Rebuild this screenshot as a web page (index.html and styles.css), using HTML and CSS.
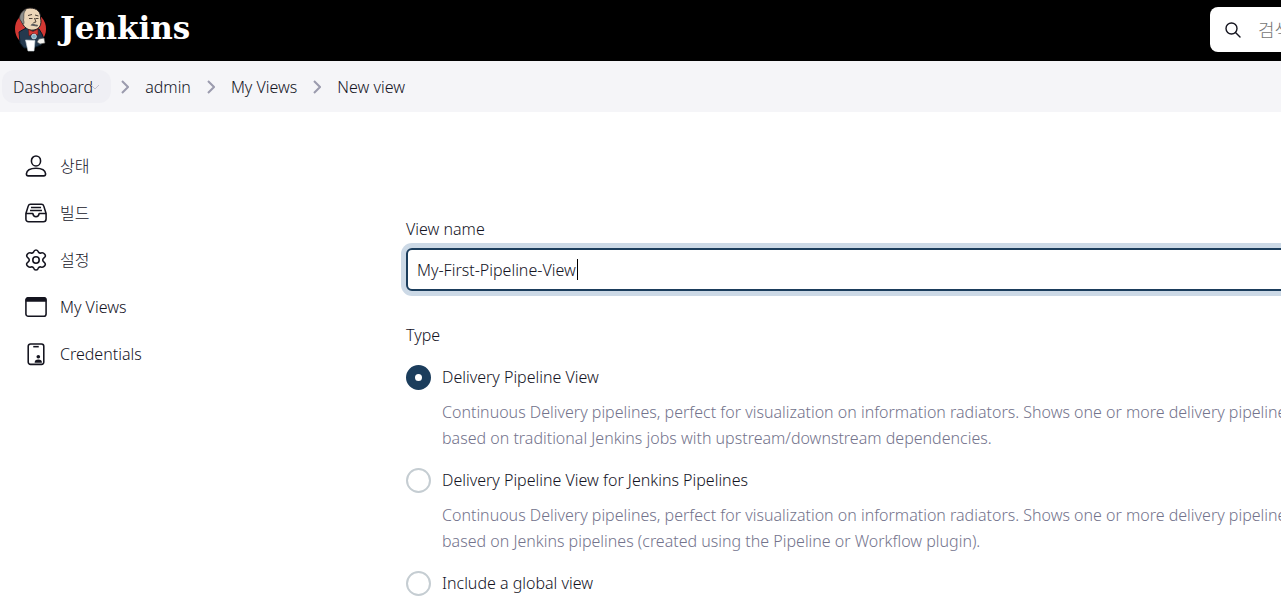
FILE: index.html
```html
<!DOCTYPE html>
<html lang="ko">
<head>
  <meta charset="UTF-8" />
  <title>New view [Jenkins]</title>
  <meta name="viewport" content="width=device-width, initial-scale=1.0" />
  <link rel="stylesheet" href="styles.css">
</head>
<body>
  <div class="page">
    <header class="page-header">
      <a href="#" class="brand">
        <svg class="brand-logo" viewBox="0 0 34 46" aria-hidden="true">
          <ellipse cx="16.5" cy="22" rx="15.5" ry="16.5" fill="#d33833" />
          <path d="M5 25 L12 21 L25 22 L28 27 L30 32 L27 38 L19 41 L10 41 L6 36 Z" fill="#24394e" stroke="#081a26" />
          <path d="M7 13 C5 6 10 1 16 1 C23 1 27 5 26.500 11 C28 17 26 22 20 23 C14 24 9 20 7 13Z" fill="#ecd5b8" stroke="#231f20" />
          <path d="M7 14 C4 11 6 5 12 2.500 C8.500 7 10.500 9 9.500 13 C11 17 9 19 7 14Z" fill="#8f8f8c" stroke="#303030" stroke-width=".6" />
          <path d="M14 8.500 L18 7.500 M21 8 L24.500 9 M15 11.500 L18.500 11.500 M21.500 11.500 L24.500 11.500 M20.500 11 L22 15 L19.500 15.500" fill="none" stroke="#4c4036" />
          <path d="M16.500 18.500 C18.500 15.500 20 16.500 21 17.500 C24 17.500 25 18.500 23 19.500 Z" fill="#5b5a5c" />
          <path d="M12 21 L17 25 L21 24 L19 33 L13 29Z" fill="#24394e" />
          <path d="M14.500 22.500 L19 24.500 L24 22 L24 28 L19 26.500 L15 29 Z" fill="#d33833" stroke="#5d1613" stroke-width=".6" />
          <circle cx="20" cy="29.500" r="2.400" fill="#81b0c4" stroke="#e8eef2" stroke-width=".7" />
          <path d="M11.500 33 L21 33.500 L20 44 L14 44Z" fill="#fff" stroke="#c9d3d8" stroke-width=".6" />
          <path d="M25 32 L30 31 L31 36 L26 37 L23 35Z" fill="#f1f1ee" stroke="#555" stroke-width=".6" />
        </svg>
        <span class="brand-name">Jenkins</span>
      </a>
      <form class="search-box" role="search">
        <svg class="search-icon" viewBox="0 0 16 16" aria-hidden="true">
          <circle cx="6.5" cy="6.5" r="5.5" />
          <path d="M10.5 10.5 L15 15" />
        </svg>
        <input type="search" placeholder="검색 (CTRL+K)" aria-label="검색" />
      </form>
    </header>

    <nav class="breadcrumbs" aria-label="Breadcrumb">
      <a href="#" class="crumb current">Dashboard<svg class="crumb-menu" viewBox="0 0 10 6" aria-hidden="true"><path d="M1 1 L5 5 L9 1" /></svg></a>
      <svg class="separator" viewBox="0 0 8 14" aria-hidden="true"><path d="M1 1 L7 7 L1 13" /></svg>
      <a href="#" class="crumb">admin</a>
      <svg class="separator" viewBox="0 0 8 14" aria-hidden="true"><path d="M1 1 L7 7 L1 13" /></svg>
      <a href="#" class="crumb">My Views</a>
      <svg class="separator" viewBox="0 0 8 14" aria-hidden="true"><path d="M1 1 L7 7 L1 13" /></svg>
      <a href="#" class="crumb">New view</a>
    </nav>

    <div class="page-body">
      <nav class="side-panel" aria-label="Tasks">
        <a href="#" class="task">
          <svg viewBox="0 0 24 24" aria-hidden="true">
            <ellipse cx="12" cy="6.5" rx="5" ry="5.5" />
            <path d="M1.500 20.5 C2 16.500 6.5 14.500 12 14.500 S22 16.500 22.500 20.5 C22.500 22 21.5 22.800 20.5 22.800 H3.5 C2.5 22.800 1.500 22 1.500 20.500Z" />
          </svg>
          <span>상태</span>
        </a>
        <a href="#" class="task">
          <svg viewBox="0 0 24 24" aria-hidden="true">
            <path d="M1 12.500 L3.500 4.500 Q4.100 2.500 6 2.500 H18 Q19.900 2.500 20.500 4.500 L23 12.500 V18.500 Q23 21.500 20 21.500 H4 Q1 21.500 1 18.500Z" />
            <path d="M1 12.500 H8.500 Q9 16 12 16 T15.500 12.500 H23 M6.500 6 H17.500 M5.500 9.300 H18.500" />
          </svg>
          <span>빌드</span>
        </a>
        <a href="#" class="task">
          <svg viewBox="0 0 24 24" aria-hidden="true">
            <circle cx="12" cy="12" r="3.5" />
            <path d="M9.5 3.2 Q10 1 12 1 T14.500 3.200 Q15.500 5 17.500 4.300 Q19.800 3.500 21.500 5.700 T21 9.400 Q19.300 10.700 19.300 12 T21 14.600 Q23 16.200 21.500 18.300 T17.500 19.700 Q15.500 19 14.500 20.800 Q14 23 12 23 T9.500 20.800 Q8.500 19 6.500 19.700 Q4.200 20.500 2.500 18.300 T3 14.600 Q4.700 13.300 4.700 12 T3 9.400 Q1 7.800 2.500 5.700 T6.500 4.300 Q8.500 5 9.500 3.200Z" />
          </svg>
          <span>설정</span>
        </a>
        <a href="#" class="task">
          <svg viewBox="0 0 24 24" aria-hidden="true">
            <rect x="1" y="2" width="22" height="20" rx="2.500" />
            <path class="solid" d="M1.500 5.500 V4 Q1.500 2 4 2 H20 Q22.500 2 22.500 4 V5.500Z" />
          </svg>
          <span>My Views</span>
        </a>
        <a href="#" class="task">
          <svg viewBox="0 0 24 24" aria-hidden="true">
            <rect x="3.500" y="1" width="17" height="22.300" rx="2.500" />
            <path d="M9 4 H15" />
            <circle class="fill" cx="14.500" cy="15" r="2" />
            <path class="fill" d="M10.500 21.500 Q10.500 18 14.500 18 T18.500 21.500Z" />
          </svg>
          <span>Credentials</span>
        </a>
      </nav>

      <main class="main-panel">
        <form class="view-form">
          <label class="form-label" for="name">View name</label>
          <div class="name-field">
            <input type="text" id="name" value="My-First-Pipeline-View" />
            <span class="caret"></span>
          </div>

          <fieldset class="types">
            <legend class="form-label">Type</legend>
            <div class="type">
              <input type="radio" name="mode" id="type-delivery" aria-describedby="help-delivery" checked />
              <label for="type-delivery">Delivery Pipeline View</label>
              <p id="help-delivery">Continuous Delivery pipelines, perfect for visualization on information radiators. Shows one or more delivery pipelines based on traditional Jenkins jobs with upstream/downstream dependencies.</p>
            </div>
            <div class="type">
              <input type="radio" name="mode" id="type-workflow" aria-describedby="help-workflow" />
              <label for="type-workflow">Delivery Pipeline View for Jenkins Pipelines</label>
              <p id="help-workflow">Continuous Delivery pipelines, perfect for visualization on information radiators. Shows one or more delivery pipelines based on Jenkins pipelines (created using the Pipeline or Workflow plugin).</p>
            </div>
            <div class="type">
              <input type="radio" name="mode" id="type-global" />
              <label for="type-global">Include a global view</label>
            </div>
          </fieldset>
        </form>
      </main>
    </div>
  </div>
</body>
</html>
```
FILE: styles.css
```css
* {
  box-sizing: border-box;
}

html {
  overflow: hidden;
}

body {
  margin: 0;
  background: #fff;
  color: #14141f;
  font-family: "Noto Sans", "Noto Sans CJK KR", sans-serif;
  font-size: 16px;
  font-weight: 300;
  line-height: 26px;
}

a {
  color: inherit;
  text-decoration: none;
}

input {
  font: inherit;
  color: inherit;
  margin: 0;
}

.page {
  min-width: 1520px;
}

.page-header {
  display: flex;
  align-items: center;
  justify-content: space-between;
  height: 61px;
  padding: 0 10px 2px 14px;
  background: #000;
}

.brand {
  display: flex;
  align-items: center;
  gap: 12px;
  color: #fff;
}

.brand-logo {
  width: 34px;
  height: 46px;
}

.brand-name {
  padding-bottom: 4px;
  font-family: "DejaVu Serif", serif;
  font-size: 31px;
  font-weight: bold;
  line-height: 40px;
}

.search-box {
  display: flex;
  align-items: center;
  gap: 15px;
  width: 300px;
  height: 45px;
  padding: 0 15px;
  border-radius: 8px;
  background: #fff;
}

.search-icon {
  flex: none;
  width: 16px;
  height: 16px;
  fill: none;
  stroke: #14141f;
  stroke-width: 1.4;
  stroke-linecap: round;
}

.search-box input {
  flex: 1;
  min-width: 0;
  border: none;
  outline: none;
  background: none;
  font-size: 18px;
}

.search-box input::placeholder {
  color: #757575;
}

.breadcrumbs {
  display: flex;
  align-items: center;
  gap: 16px;
  height: 51px;
  padding: 0 2px;
  background: #f5f5f8;
}

.crumb.current {
  display: flex;
  align-items: center;
  height: 33px;
  margin-right: -6px;
  padding: 0 11px;
  border-radius: 12px;
  background: #efeff4;
}

.crumb-menu {
  width: 10px;
  height: 6px;
  margin-left: -3px;
  fill: none;
  stroke: #c3c3cf;
}

.separator {
  width: 8px;
  height: 14px;
  fill: none;
  stroke: #9b9bae;
  stroke-width: 2;
}

.page-body {
  display: flex;
}

.side-panel {
  display: flex;
  flex: none;
  flex-direction: column;
  gap: 11px;
  width: 406px;
  padding: 36px 25px;
}

.task {
  display: flex;
  align-items: center;
  gap: 13px;
  height: 36px;
}

.task svg {
  width: 22px;
  height: 22px;
  fill: none;
  stroke: #14141f;
  stroke-width: 1.7;
  stroke-linejoin: round;
  overflow: visible;
}

.task .solid {
  fill: #14141f;
}

.task .fill {
  fill: #14141f;
  stroke: none;
}

.main-panel {
  flex: 1;
  padding-top: 104px;
}

.view-form {
  max-width: 900px;
}

.form-label {
  display: block;
  padding: 0;
}

.name-field {
  position: relative;
  margin-top: 6px;
}

.name-field input {
  display: block;
  width: 100%;
  height: 43px;
  padding: 0 9px;
  border: 2px solid #1b3d5c;
  border-radius: 6px;
  outline: none;
  box-shadow: 0 0 0 5px #ccd9e6;
}

.caret {
  position: absolute;
  top: 11px;
  left: 171px;
  width: 1px;
  height: 21px;
  background: #000;
}

.types {
  margin: 31px 0 0;
  padding: 0;
  border: none;
}

.types legend {
  margin-bottom: 16px;
}

.type {
  display: grid;
  grid-template-columns: 25px 1fr;
  column-gap: 11px;
  align-items: center;
  margin-bottom: 16px;
}

.type input {
  appearance: none;
  width: 25px;
  height: 25px;
  border: 2px solid #c5cdd2;
  border-radius: 50%;
  background: #fff;
}

.type input:checked {
  border: 9px solid #1b3d5c;
}

.type p {
  grid-column: 2;
  margin: 9px 0 0;
  color: #73738c;
}
```
